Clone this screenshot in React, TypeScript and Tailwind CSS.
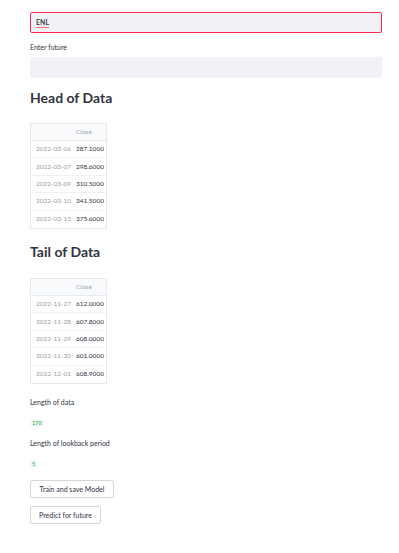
const head = [
  ["2022-03-06", "287.1000"],
  ["2022-03-07", "298.6000"],
  ["2022-03-09", "310.5000"],
  ["2022-03-10", "341.5000"],
  ["2022-03-13", "375.6000"],
]

const tail = [
  ["2022-11-27", "612.0000"],
  ["2022-11-28", "607.8000"],
  ["2022-11-29", "608.0000"],
  ["2022-11-30", "601.0000"],
  ["2022-12-01", "608.9000"],
]

const DataTable = ({ rows }: { rows: string[][] }) => (
  <div className="w-[77px] border border-[#e6e9ef] bg-white">
    <div className="flex h-[17px] items-center border-b border-[#e6e9ef] bg-[#f8f9fb] text-[6.5px] text-[#a3a8b4]">
      <div className="w-[40px]" />
      <div className="pl-[5px]">Close</div>
    </div>
    {rows.map(([d, v], i) => (
      <div
        key={d}
        className={`flex h-[17.4px] items-center text-[6.5px] ${i < rows.length - 1 ? "border-b border-[#eef0f4]" : ""}`}
      >
        <div className="w-[40px] pl-[5px] text-[#9a9ca8]">{d}</div>
        <div className="pl-[5px] text-[#31333f]">{v}</div>
      </div>
    ))}
  </div>
)

const Code = ({ children }: { children: string }) => (
  <div
    className="h-[8px] w-fit rounded-[1px] bg-[#f6f8f9] px-[2px] text-[5.5px] leading-[8px] text-[#09ab3b]"
    style={{ fontFamily: "'DejaVu Sans Mono', monospace" }}
  >
    {children}
  </div>
)

const App = () => {
  return (
    <div className="min-h-screen bg-white pl-[30px] pt-[12px] text-[#31333f]" style={{ fontFamily: "Lato, 'Noto Sans', sans-serif" }}>
      <div className="flex h-[21px] w-[352px] items-center rounded-[2px] border border-[#ff2b4f] bg-[#f0f2f6] pl-[5px] text-[7px] font-semibold">
        <span className="underline decoration-[#ff6b7b] underline-offset-[2px]">ENL</span>
      </div>
      <div className="mt-[9px] h-[10px] text-[7px] leading-[10px] text-[#31333f]">Enter future</div>
      <div className="mt-[5px] h-[21px] w-[352px] rounded-[2px] bg-[#f0f2f6]" />

      <h2 className="mt-[10px] h-[20px] text-[14px] font-bold leading-[20px]">Head of Data</h2>
      <div className="mt-[15px]">
        <DataTable rows={head} />
      </div>

      <h2 className="mt-[13px] h-[20px] text-[14px] font-bold leading-[20px]">Tail of Data</h2>
      <div className="mt-[16px]">
        <DataTable rows={tail} />
      </div>

      <div className="mt-[13px] h-[10px] text-[7px] leading-[10px]">Length of data</div>
      <div className="mt-[12px]">
        <Code>178</Code>
      </div>
      <div className="mt-[11px] h-[10px] text-[7px] leading-[10px]">Length of lookback period</div>
      <div className="mt-[12px]">
        <Code>5</Code>
      </div>
      <div className="mt-[12px]">
        <button className="flex h-[18px] w-[84px] items-center justify-center rounded-[2px] border border-[#d6d6d9] bg-white text-[7px]">
          Train and save Model
        </button>
      </div>
      <div className="mt-[8px]">
        <button className="flex h-[18px] w-[71px] items-center justify-center rounded-[2px] border border-[#d6d6d9] bg-white text-[7px]">
          Predict for future
        </button>
      </div>
    </div>
  )
}

export default App
